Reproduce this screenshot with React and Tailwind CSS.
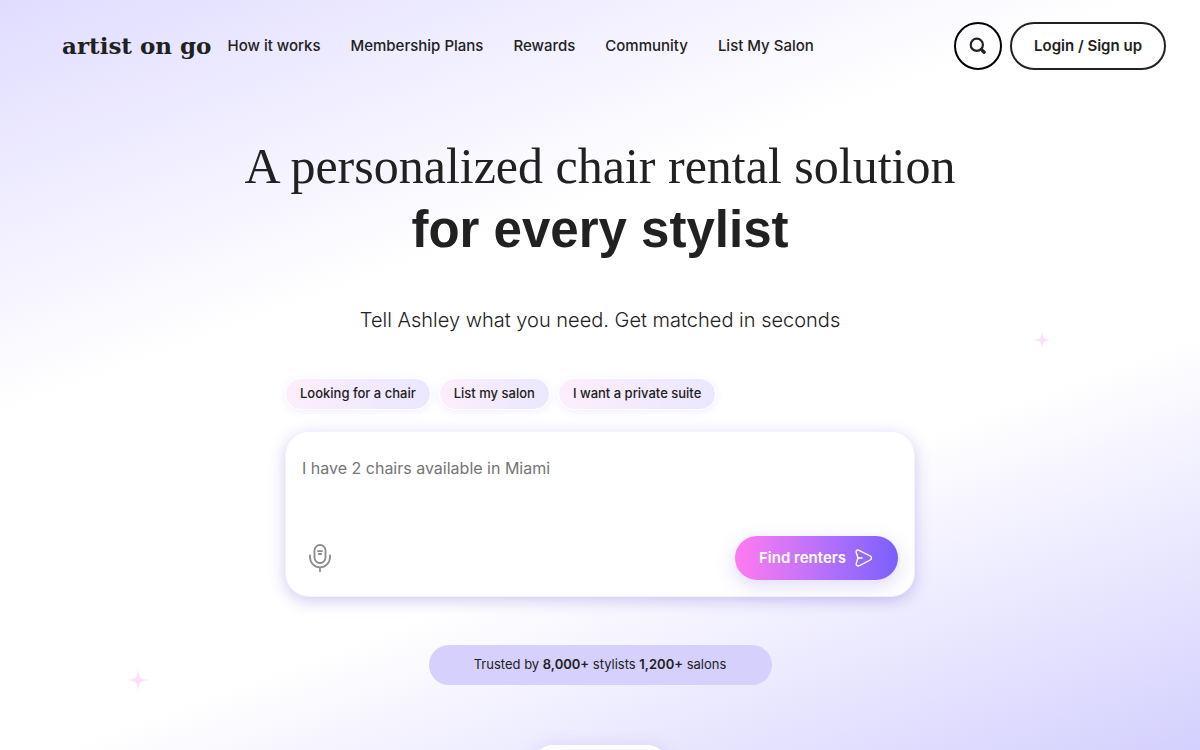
const navLinks = ['How it works', 'Membership Plans', 'Rewards', 'Community', 'List My Salon'];
const prompts = ['Looking for a chair', 'List my salon', 'I want a private suite'];

function SearchIcon() {
  return (
    <svg width="18" height="18" viewBox="0 0 18 18" fill="none" stroke="#212121" strokeLinecap="round" aria-hidden="true">
      <circle cx="7.8" cy="7.8" r="6.1" strokeWidth="2.2" />
      <path d="M12 12 13.5 13.5" strokeWidth="2.2" />
      <path d="M13.6 13.7 15.2 15.2" strokeWidth="3.4" />
    </svg>
  );
}

function MicIcon() {
  return (
    <svg width="24" height="30" viewBox="0 0 24 30" fill="none" stroke="#8c8c8c" strokeWidth="1.8" strokeLinecap="round" aria-hidden="true">
      <rect x="6.5" y="2" width="11" height="18" rx="5.5" />
      <path d="M2 12.5v1.8a10 10 0 0 0 20 0v-1.8M12 24.3v4M10 8.2h4M10.8 11h2.4" />
    </svg>
  );
}

function SendIcon() {
  return (
    <svg width="20" height="20" viewBox="0 0 20 20" fill="none" stroke="#fff" strokeWidth="1.4" strokeLinecap="round" strokeLinejoin="round" aria-hidden="true">
      <path d="M5.1 2.3 16.2 8c1.7.9 1.7 3.1 0 4L5.5 17.6c-2.1 1.1-3.9-.4-3.2-2.5L3.6 11.3a4 4 0 0 0 0-2.6L2.2 4.6C1.6 2.6 3.3 1.4 5.1 2.3Z" />
      <path d="M4 10h4.2" />
    </svg>
  );
}

function Sparkle({ className }) {
  return (
    <svg className={className} viewBox="0 0 20 20" fill="#fce0fc" aria-hidden="true">
      <path d="M10 0c.5 8 1.5 9.500 10 10-8.500.5-9.500 2-10 10-.5-8-1.500-9.500-10-10 8.500-.5 9.500-2 10-10Z" />
    </svg>
  );
}

export default function App() {
  return (
    <div className="relative min-h-screen overflow-hidden bg-[linear-gradient(160deg,#e0dcff_0%,#ffffff_35%,#ffffff_65%,#d4d0fe_100%)] font-['Inter',sans-serif] text-[#212121]">
      <header className="flex items-center justify-between pt-[22px] pr-[34px] pl-[62px]">
        <div className="flex items-center gap-4">
          <a href="#" className="font-['DejaVu_Serif','Liberation_Serif',serif] text-[23px] leading-7 font-bold whitespace-nowrap">
            artist on go
          </a>
          <nav className="flex items-center gap-[30px] text-[15px] leading-6 font-medium whitespace-nowrap">
            {navLinks.map((label) => (
              <a key={label} href="#">{label}</a>
            ))}
          </nav>
        </div>
        <div className="flex items-center gap-2">
          <button type="button" aria-label="Search" className="flex size-12 items-center justify-center rounded-full border-2 border-black">
            <SearchIcon />
          </button>
          <button type="button" className="h-12 rounded-full border-2 border-[#212121] px-[22px] text-[15px] font-semibold whitespace-nowrap">
            Login / Sign up
          </button>
        </div>
      </header>

      <main className="flex flex-col items-center px-4 pt-16">
        <h1 className="flex flex-col text-center">
          <span className="font-['Liberation_Serif',serif] text-[50px] leading-[64px]">A personalized chair rental solution</span>
          <span className="font-['Liberation_Sans',sans-serif] text-[51px] leading-[64px] font-bold">for every stylist</span>
        </h1>
        <p className="mt-11 text-center text-xl leading-7 font-light">Tell Ashley what you need. Get matched in seconds</p>

        <div className="mt-11 w-full max-w-[630px]">
          <div className="flex flex-wrap gap-2">
            {prompts.map((label) => (
              <button
                key={label}
                type="button"
                className="h-8 rounded-full border border-white bg-linear-to-r from-[#fdeefc] to-[#eae7ff] px-[14px] text-[13px] font-medium whitespace-nowrap shadow-[0_2px_8px_rgba(120,100,240,0.1)]"
              >
                {label}
              </button>
            ))}
          </div>

          <form className="mt-[21px] rounded-3xl border border-[#f4f2ff] bg-white p-4 shadow-[0_4px_16px_rgba(90,70,200,0.28)]" onSubmit={(event) => event.preventDefault()}>
            <textarea
              aria-label="Describe what you need"
              placeholder="I have 2 chairs available in Miami"
              className="block h-[88px] w-full resize-none bg-transparent pt-2 text-base leading-6 outline-none placeholder:text-[#757575]"
            />
            <div className="flex items-center justify-between">
              <button type="button" aria-label="Use microphone" className="pl-[6px]">
                <MicIcon />
              </button>
              <button
                type="submit"
                className="flex h-11 items-center gap-2 rounded-full bg-linear-to-r from-[#ff7af0] to-[#7a5fff] px-6 text-[15px] font-semibold whitespace-nowrap text-white shadow-[0_6px_20px_rgba(110,80,240,0.22)]"
              >
                Find renters
                <SendIcon />
              </button>
            </div>
          </form>
        </div>

        <p className="mt-12 mb-16 flex h-10 w-full max-w-[343px] items-center justify-center rounded-full bg-[#d5d0fc] text-[13px] whitespace-nowrap">
          <span>Trusted by <strong className="font-semibold">8,000+</strong> stylists <strong className="font-semibold">1,200+</strong> salons</span>
        </p>
      </main>

      <Sparkle className="absolute top-[44%] left-[86%] size-5" />
      <Sparkle className="absolute top-[89%] left-[10.5%] size-6" />
      <div className="absolute -bottom-[43px] left-1/2 h-12 w-[140px] -translate-x-1/2 rounded-full border-2 border-white bg-[#fbfaff] shadow-[0_0_16px_rgba(120,100,240,0.15)]" />
    </div>
  );
}
